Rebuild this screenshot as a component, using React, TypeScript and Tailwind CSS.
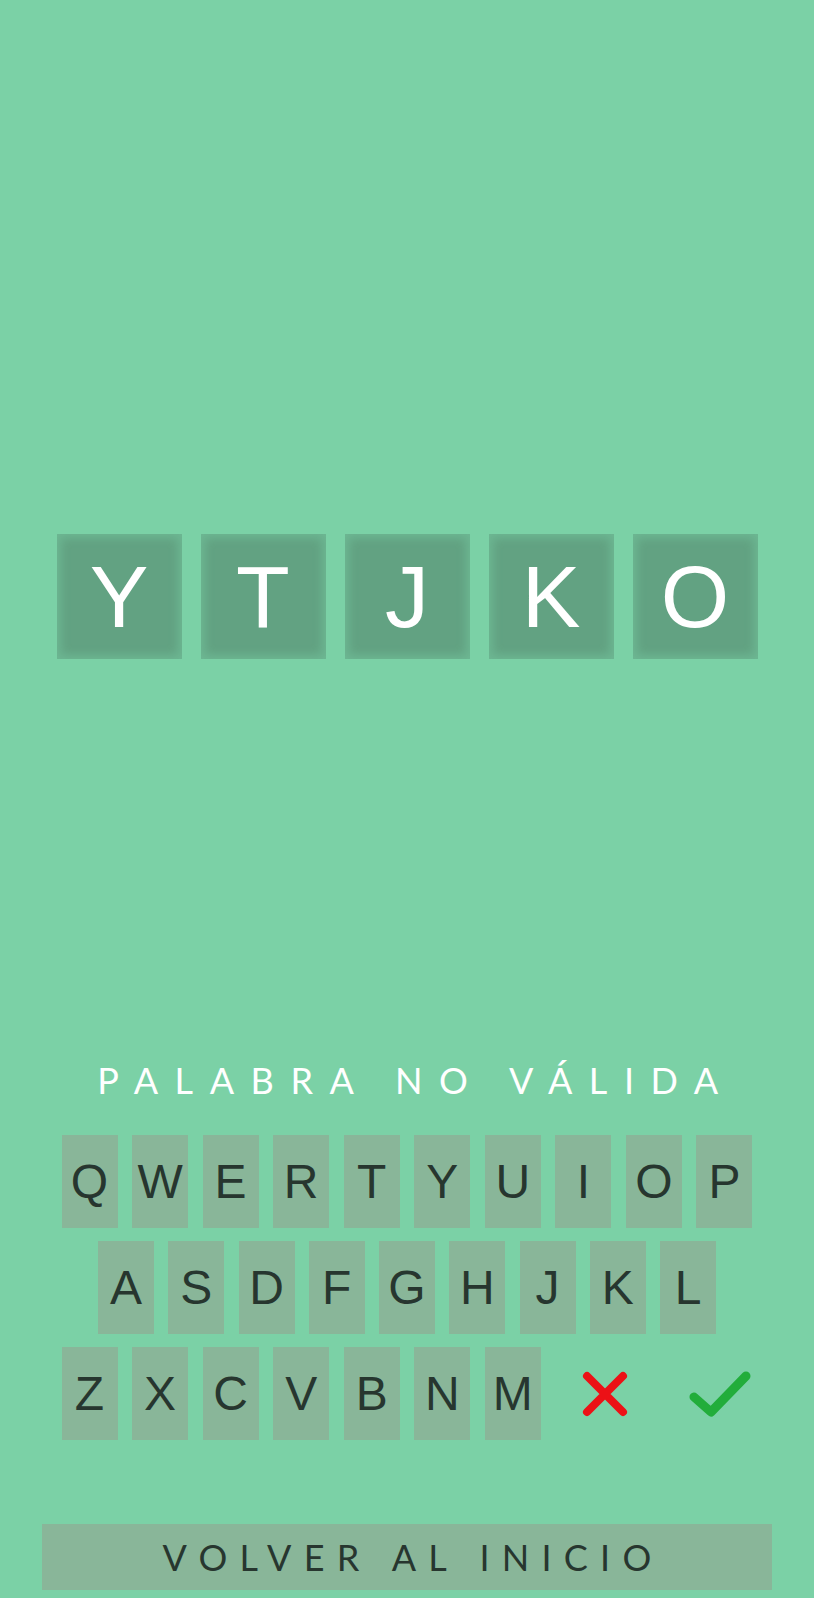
import React from "react";

const row1 = ["Q", "W", "E", "R", "T", "Y", "U", "I", "O", "P"];
const row2 = ["A", "S", "D", "F", "G", "H", "J", "K", "L"];
const row3 = ["Z", "X", "C", "V", "B", "N", "M"];
const word = ["Y", "T", "J", "K", "O"];

function Key({ k }: { k: string }) {
  return (
    <div className="w-[56px] h-[93px] shrink-0 bg-[#89b699] flex items-center justify-center text-[48px] leading-none text-[#27362f] [font-family:'Liberation_Sans',Arial,sans-serif]">
      {k}
    </div>
  );
}

export default function App() {
  return (
    <div className="w-full h-[1598px] bg-[#7bd1a6] flex flex-col items-center overflow-hidden">
      <div className="mt-[534px] flex gap-[19px]">
        {word.map((l, i) => (
          <div
            key={i}
            className="w-[125px] h-[125px] bg-[#62a282] shadow-[inset_0_0_10px_4px_rgba(123,209,166,0.45)] flex items-center justify-center text-white text-[88px] leading-none [font-family:'Liberation_Sans',Arial,sans-serif]"
          >
            {l}
          </div>
        ))}
      </div>

      <div className="mt-[403px] pl-[18px] text-white text-[36px] leading-none tracking-[0.46em] font-normal [font-family:Lato,'Open_Sans',sans-serif]">
        PALABRA NO VÁLIDA
      </div>

      <div className="mt-[37px] w-[691px] flex flex-col gap-[13px]">
        <div className="flex justify-between">
          {row1.map((k) => (
            <Key key={k} k={k} />
          ))}
        </div>
        <div className="flex justify-between w-[618px] mx-auto">
          {row2.map((k) => (
            <Key key={k} k={k} />
          ))}
        </div>
        <div className="flex gap-[14.56px]">
          {row3.map((k) => (
            <Key key={k} k={k} />
          ))}
          <div className="w-[100px] h-[93px] shrink-0 flex items-center justify-center">
            <svg width="46" height="46" viewBox="0 0 46 46">
              <path
                d="M5 5 L41 41 M41 5 L5 41"
                stroke="#ec1116"
                strokeWidth="8"
                strokeLinecap="round"
                fill="none"
              />
            </svg>
          </div>
          <div className="w-[100px] h-[93px] shrink-0 flex items-center justify-center">
            <svg width="62" height="48" viewBox="0 0 62 48">
              <path
                d="M5 27 L22 42 L57 6"
                stroke="#22ad3b"
                strokeWidth="9"
                strokeLinecap="round"
                strokeLinejoin="round"
                fill="none"
              />
            </svg>
          </div>
        </div>
      </div>

      <div className="mt-[84px] w-[730px] h-[66px] shrink-0 bg-[#89b699] flex items-center justify-center pl-[12px] text-[#27362f] text-[36px] leading-none tracking-[0.34em] font-normal [font-family:Lato,'Open_Sans',sans-serif]">
        VOLVER AL INICIO
      </div>
    </div>
  );
}
